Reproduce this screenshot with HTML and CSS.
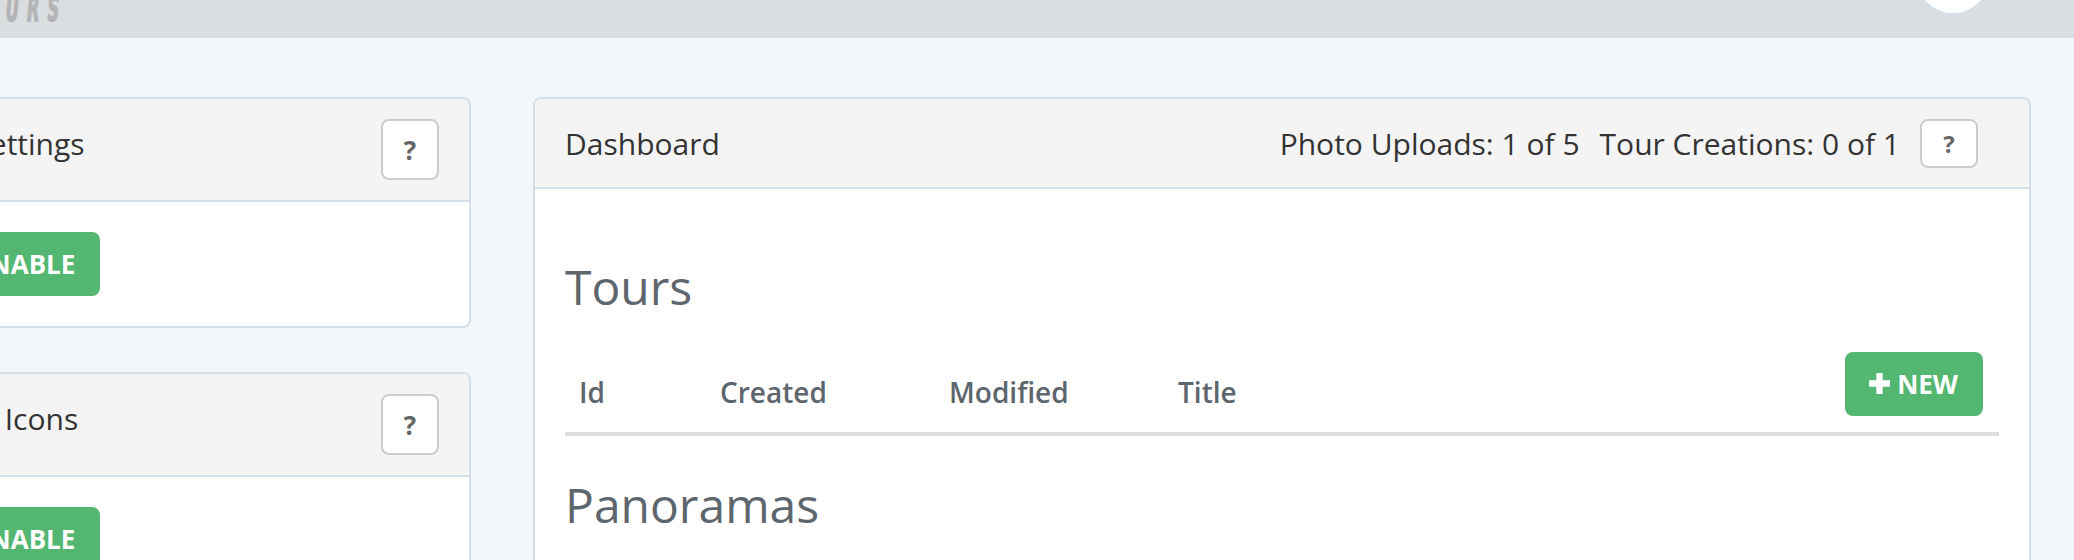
FILE: index.html
```html
<!DOCTYPE html>
<html lang="en">
<head>
    <meta charset="UTF-8">
    <meta name="viewport" content="width=device-width, initial-scale=1.0">
    <title>Tours - Dashboard</title>
    <link rel="stylesheet" href="styles.css">
</head>
<body>
    <div class="topbar">
        <div class="logo">TOURS</div>
        <div class="avatar"></div>
    </div>

    <div class="layout">
        <div class="side">
            <div class="panel">
                <div class="panel-heading">
                    <span class="panel-title">Site Settings</span>
                    <button class="btn-help">?</button>
                </div>
                <div class="panel-body">
                    <button class="btn btn-green">
                        <svg class="icon-check" viewBox="0 0 24 20"><path d="M2 10l7 7L22 3" fill="none" stroke="#fff" stroke-width="5"/></svg>
                        ENABLE
                    </button>
                </div>
            </div>
            <div class="panel">
                <div class="panel-heading">
                    <span class="panel-title">Scene Icons</span>
                    <button class="btn-help">?</button>
                </div>
                <div class="panel-body">
                    <button class="btn btn-green">
                        <svg class="icon-check" viewBox="0 0 24 20"><path d="M2 10l7 7L22 3" fill="none" stroke="#fff" stroke-width="5"/></svg>
                        ENABLE
                    </button>
                </div>
            </div>
        </div>

        <div class="panel main-panel">
            <div class="panel-heading dash-heading">
                <span class="panel-title">Dashboard</span>
                <div class="stats">
                    <span>Photo Uploads: 1 of 5</span>
                    <span>Tour Creations: 0 of 1</span>
                    <button class="btn-help btn-help-sm">?</button>
                </div>
            </div>
            <div class="panel-body dash-body">
                <h3>Tours</h3>
                <table class="list">
                    <thead>
                        <tr>
                            <th class="col-id">Id</th>
                            <th class="col-date">Created</th>
                            <th class="col-date">Modified</th>
                            <th>Title</th>
                            <th class="col-action">
                                <button class="btn btn-green">
                                    <svg class="icon-plus" viewBox="0 0 20 20"><path d="M7 0h6v7h7v6h-7v7H7v-7H0V7h7z" fill="#fff"/></svg>
                                    NEW
                                </button>
                            </th>
                        </tr>
                    </thead>
                    <tbody></tbody>
                </table>
                <h3>Panoramas</h3>
            </div>
        </div>
    </div>
</body>
</html>
```

FILE: styles.css
```css
body {
    margin: 0;
    background-color: #f3f7fa;
    font-family: "Open Sans", "Liberation Sans", sans-serif;
    color: #333;
    overflow: hidden;
}
.topbar {
    height: 36px;
    background-color: #dadee1;
    border-bottom: 2px solid #d4dfe9;
    display: flex;
    justify-content: space-between;
    align-items: flex-end;
    overflow: hidden;
}
.logo {
    font-family: "DejaVu Sans Condensed", "DejaVu Sans", sans-serif;
    font-weight: bold;
    font-style: italic;
    font-size: 36px;
    line-height: 30px;
    letter-spacing: 16px;
    color: #b3b4b5;
    -webkit-text-stroke: 1.5px #b3b4b5;
    margin-left: -35px;
    margin-bottom: 12px;
    transform: scaleX(0.5);
    transform-origin: left bottom;
}
.avatar {
    width: 72px;
    height: 72px;
    border-radius: 50%;
    background-color: #fff;
    border: 2px solid #d4e1ec;
    margin-right: 83px;
    margin-bottom: 21px;
    flex-shrink: 0;
}
.layout {
    display: flex;
    align-items: flex-start;
    padding-top: 59px;
    gap: 62px;
}
.side {
    width: 589px;
    margin-left: -118px;
    flex-shrink: 0;
}
.side .panel + .panel {
    margin-top: 44px;
}
.panel {
    background-color: #fff;
    border: 2px solid #d4dfe9;
    border-radius: 8px;
    overflow: hidden;
}
.panel-heading {
    background-color: #f4f4f4;
    border-bottom: 2px solid #d4dfe9;
    padding: 20px 30px;
    display: flex;
    justify-content: space-between;
    align-items: flex-start;
}
.panel-title {
    font-size: 30px;
    line-height: 49px;
    white-space: nowrap;
}
.btn-help {
    width: 58px;
    height: 61px;
    background-color: #fff;
    border: 2px solid #ccc;
    border-radius: 8px;
    font-family: "Open Sans", sans-serif;
    font-weight: bold;
    font-size: 26px;
    color: #666;
    padding: 0;
}
.btn-help-sm {
    height: 49px;
    font-size: 24px;
}
.panel-body {
    padding: 30px;
}
.btn {
    display: inline-flex;
    align-items: center;
    gap: 7px;
    font-family: "Open Sans", sans-serif;
    font-weight: bold;
    font-size: 26px;
    line-height: 40px;
    padding: 12px 25px 12px 24px;
    border: none;
    border-radius: 8px;
    cursor: pointer;
}
.btn-green {
    background-color: #53b772;
    color: #fff;
}
.icon-plus {
    width: 21px;
    height: 21px;
}
.icon-check {
    width: 26px;
    height: 24px;
    margin-right: 4px;
}
.main-panel {
    flex: 1;
    margin-right: 43px;
}
.dash-heading {
    padding: 20px 51px 19px 30px;
}
.stats {
    display: flex;
    align-items: center;
    gap: 20px;
    font-size: 30px;
    line-height: 49px;
}
.stats .btn-help {
    margin-left: 0;
}
.dash-body h3 {
    font-size: 48px;
    font-weight: 400;
    line-height: 1.1;
    color: #5e666d;
    margin: 43px 0 22px;
}
.dash-body h3:first-child {
    margin-top: 42px;
}
.list {
    width: 100%;
    border-collapse: collapse;
}
.list th {
    text-align: left;
    vertical-align: bottom;
    font-size: 28px;
    font-weight: 600;
    color: #5d666d;
    line-height: 40px;
    padding: 16px 16px 20px 14px;
    border-bottom: 4px solid #ddd;
}
.list th.col-action {
    text-align: right;
    padding: 16px;
}
.col-id {
    width: 111px;
}
.col-date {
    width: 199px;
}
```
